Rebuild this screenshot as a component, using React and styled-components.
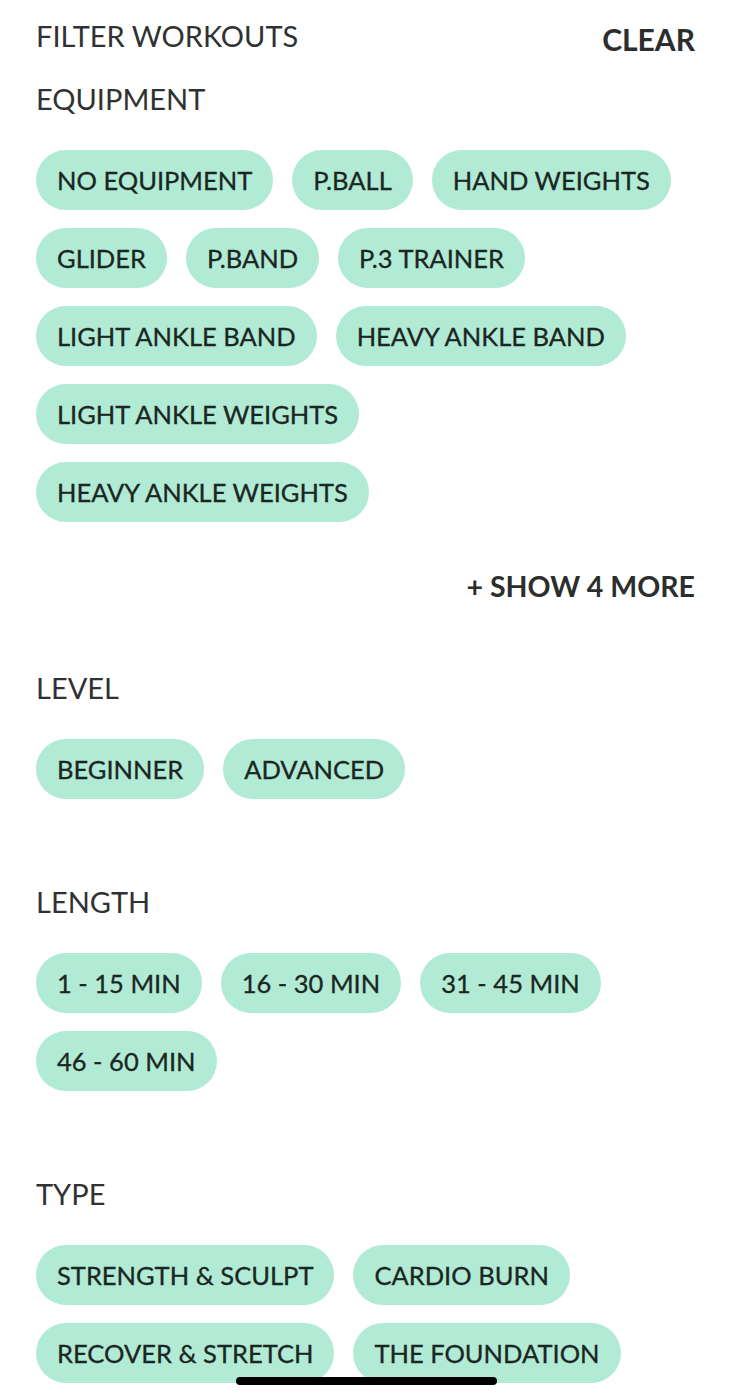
import React from 'react';
import styled, { createGlobalStyle } from 'styled-components';

const GlobalStyle = createGlobalStyle`
  html, body {
    margin: 0;
    padding: 0;
    background: #ffffff;
  }
  body {
    font-family: Lato, "Open Sans", sans-serif;
    color: #2b2e2d;
  }
`;

const sections = [
  {
    title: 'EQUIPMENT',
    items: [
      'NO EQUIPMENT',
      'P.BALL',
      'HAND WEIGHTS',
      'GLIDER',
      'P.BAND',
      'P.3 TRAINER',
      'LIGHT ANKLE BAND',
      'HEAVY ANKLE BAND',
      'LIGHT ANKLE WEIGHTS',
      'HEAVY ANKLE WEIGHTS',
    ],
    more: '+ SHOW 4 MORE',
  },
  { title: 'LEVEL', items: ['BEGINNER', 'ADVANCED'] },
  { title: 'LENGTH', items: ['1 - 15 MIN', '16 - 30 MIN', '31 - 45 MIN', '46 - 60 MIN'] },
  {
    title: 'TYPE',
    items: ['STRENGTH & SCULPT', 'CARDIO BURN', 'RECOVER & STRETCH', 'THE FOUNDATION'],
  },
];

const App = () => {
  return (
    <>
      <GlobalStyle />
      <Sheet>
        <Header>
          <Title>FILTER WORKOUTS</Title>
          <TextButton $size={30}>CLEAR</TextButton>
        </Header>
        {sections.map((section, i) => (
          <Section key={section.title} $first={i === 0} $afterMore={i > 0 && !!sections[i - 1].more}>
            <Heading>{section.title}</Heading>
            <ChipList>
              {section.items.map((item) => (
                <Chip key={item}>{item}</Chip>
              ))}
            </ChipList>
            {section.more && (
              <MoreRow>
                <TextButton $size={28.5}>{section.more}</TextButton>
              </MoreRow>
            )}
          </Section>
        ))}
      </Sheet>
      <HomeIndicator />
    </>
  );
};

const Sheet = styled.div`
  padding: 21px 37px 40px 36px;
  min-height: 1400px;
  box-sizing: border-box;
`;

const Header = styled.div`
  display: flex;
  justify-content: space-between;
  align-items: flex-start;
  height: 30px;

  & > button {
    margin-top: 3px;
  }
`;

const Title = styled.h1`
  margin: 0;
  font-size: 29px;
  line-height: 30px;
  font-weight: 400;
  color: #2f3231;
`;

const TextButton = styled.button`
  border: none;
  background: none;
  padding: 0;
  font-family: Lato, "Open Sans", sans-serif;
  font-size: ${(p) => p.$size}px;
  line-height: 30px;
  font-weight: 700;
  color: #2b2e2d;
  cursor: pointer;
`;

const Section = styled.section`
  margin-top: ${(p) => (p.$first ? '33px' : p.$afterMore ? '72px' : '88px')};
`;

const Heading = styled.h2`
  margin: 0 0 36px;
  font-size: 29px;
  line-height: 30px;
  font-weight: 400;
  color: #2f3231;
`;

const ChipList = styled.div`
  display: flex;
  flex-wrap: wrap;
  gap: 18px 19px;
`;

const Chip = styled.button`
  height: 60px;
  padding: 0 21px;
  border: none;
  border-radius: 30px;
  background: #b1ead5;
  font-family: Lato, "Open Sans", sans-serif;
  font-size: 25.5px;
  font-weight: 400;
  color: #1b2622;
  -webkit-text-stroke: 0.3px #1b2622;
  white-space: nowrap;
  cursor: pointer;
`;

const MoreRow = styled.div`
  display: flex;
  justify-content: flex-end;
  margin-top: 49px;
`;

const HomeIndicator = styled.div`
  position: fixed;
  left: 236px;
  bottom: 15px;
  width: 261px;
  height: 8px;
  border-radius: 4px;
  background: #000000;
`;

export default App;
